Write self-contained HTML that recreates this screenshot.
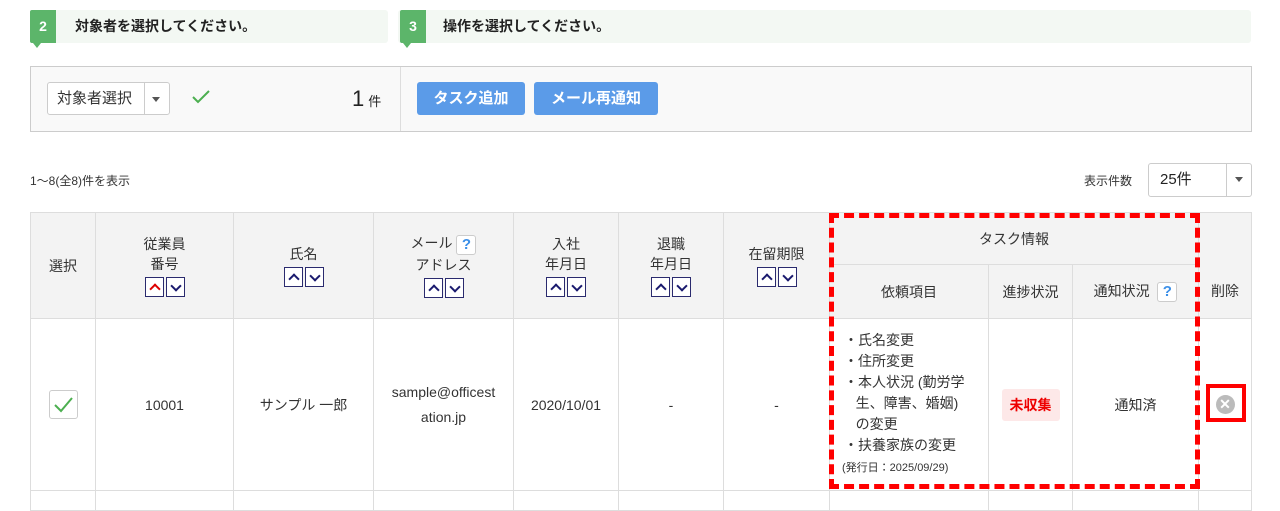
<!DOCTYPE html>
<html><head><meta charset="utf-8"><style>
*{box-sizing:border-box;margin:0;padding:0}
body{width:1280px;height:499px;overflow:hidden;background:#fff;font-family:"Liberation Sans","Noto Sans CJK JP",sans-serif;color:#333;position:relative;font-size:14px}
.a{position:absolute}
.step{background:#f3f8f3;border-radius:3px;height:33px;top:10px}
.badge{position:absolute;left:0;top:0;width:26px;height:33px;background:#5cb56a;color:#fff;font-weight:bold;font-size:14px;text-align:center;line-height:33px;border-radius:2px 0 0 2px}
.badge:after{content:"";position:absolute;left:3px;bottom:-5px;border:4px solid transparent;border-top:5px solid #5cb56a;border-bottom:0}
.step span{position:absolute;left:45px;top:0;line-height:33px;font-weight:bold;font-size:14px;color:#222}
.btn{background:#5b9be8;color:#fff;font-weight:bold;font-size:15px;border-radius:3px;height:33px;line-height:33px;text-align:center;top:82px}
table{position:absolute;left:30px;top:212px;border-collapse:collapse;width:1222px}
td,th{border:1px solid #ddd;text-align:center;font-weight:normal;font-size:14px;color:#333}
th{background:#f3f3f3;line-height:20px}
.s{display:inline-block;width:19px;height:20px;border:1px solid #2a2a6e;margin:3px 1px 0;vertical-align:middle;position:relative;background:#fff}
.s:after{content:"";position:absolute;left:5px;width:6px;height:6px;border-left:2px solid #1a1a6e;border-top:2px solid #1a1a6e}
.u:after{top:7px;transform:rotate(45deg)}
.d:after{top:4px;transform:rotate(225deg)}
.r:after{border-color:#d00}
.q{display:inline-block;width:20px;height:20px;border:1px solid #ccc;border-radius:3px;background:#fff;color:#3b8fe8;font-weight:bold;font-size:15px;line-height:18px;text-align:center;vertical-align:middle}
</style></head><body>
<div class="a step" style="left:30px;width:358px"><div class="badge">2</div><span>対象者を選択してください。</span></div>
<div class="a step" style="left:398px;width:853px"><div class="badge" style="left:2px">3</div><span>操作を選択してください。</span></div>
<div class="a" style="left:30px;top:66px;width:1222px;height:66px;background:#f9f9f9;border:1px solid #ccc"></div>
<div class="a" style="left:400px;top:67px;width:1px;height:64px;background:#ddd"></div>
<div class="a" style="left:47px;top:82px;width:123px;height:33px;background:#fff;border:1px solid #ccc;border-radius:3px;font-size:15px;line-height:31px;padding-left:9px">対象者選択</div>
<div class="a" style="left:144px;top:83px;width:1px;height:31px;background:#ccc"></div>
<div class="a" style="left:152px;top:97px;border:4px solid transparent;border-top:5px solid #555"></div>
<svg class="a" style="left:191px;top:89px" width="20" height="16"><polyline points="2,8 7,13 18,2" fill="none" stroke="#4caf50" stroke-width="2"/></svg>
<div class="a" style="left:352px;top:86px;font-size:22px;color:#222">1<span style="font-size:13px;margin-left:4px">件</span></div>
<div class="a btn" style="left:417px;width:108px">タスク追加</div>
<div class="a btn" style="left:534px;width:124px">メール再通知</div>
<div class="a" style="left:30px;top:172px;font-size:12px;color:#333">1～8(全8)件を表示</div>
<div class="a" style="left:1084px;top:172px;font-size:12px;color:#333">表示件数</div>
<div class="a" style="left:1148px;top:163px;width:104px;height:34px;border:1px solid #ccc;border-radius:3px;font-size:15px;line-height:32px;padding-left:11px;color:#222">25件</div>
<div class="a" style="left:1226px;top:164px;width:1px;height:32px;background:#ccc"></div>
<div class="a" style="left:1235px;top:177px;border:4px solid transparent;border-top:5px solid #555"></div>
<table>
<tr style="height:52px">
<th rowspan="2" style="width:65px">選択</th>
<th rowspan="2" style="width:138px">従業員<br>番号<br><span class="s u r"></span><span class="s d"></span></th>
<th rowspan="2" style="width:140px">氏名<br><span class="s u"></span><span class="s d"></span></th>
<th rowspan="2" style="width:140px">メール <span class="q">?</span><br>アドレス<br><span class="s u"></span><span class="s d"></span></th>
<th rowspan="2" style="width:105px">入社<br>年月日<br><span class="s u"></span><span class="s d"></span></th>
<th rowspan="2" style="width:105px">退職<br>年月日<br><span class="s u"></span><span class="s d"></span></th>
<th rowspan="2" style="width:106px">在留期限<br><span class="s u"></span><span class="s d"></span></th>
<th colspan="3">タスク情報</th>
<th rowspan="1" style="width:53px;border-bottom:none"></th>
</tr>
<tr style="height:54px">
<th style="width:159px">依頼項目</th><th style="width:84px">進捗状況</th><th style="width:126px">通知状況 &nbsp;<span class="q">?</span></th><th style="border-top:none">削除</th>
</tr>
<tr style="height:172px">
<td><span style="display:inline-block;width:29px;height:29px;border:1px solid #ccc;border-radius:3px;vertical-align:middle"><svg width="27" height="27"><polyline points="5,14 11,20 22,7" fill="none" stroke="#4caf50" stroke-width="2"/></svg></span></td>
<td>10001</td><td>サンプル 一郎</td><td style="line-height:25px">sample@officest<br>ation.jp</td><td>2020/10/01</td><td>-</td><td>-</td>
<td style="text-align:left;padding-left:14px;line-height:21px">・氏名変更<br>・住所変更<br>・本人状況 (勤労学<br>&nbsp;&nbsp;&nbsp;生、障害、婚姻)<br>&nbsp;&nbsp;&nbsp;の変更<br>・扶養家族の変更<br><span style="font-size:11px;margin-left:-2px">(発行日：2025/09/29)</span></td>
<td><span style="display:inline-block;background:#fde8e8;color:#e00;font-weight:bold;padding:6px 8px;border-radius:3px">未収集</span></td>
<td>通知済</td>
<td><span style="display:inline-block;width:19px;height:19px;border-radius:50%;background:#bbb;color:#fff;font-size:14px;line-height:19px;font-weight:bold">✕</span></td>
</tr>
<tr style="height:20px"><td></td><td></td><td></td><td></td><td></td><td></td><td></td><td></td><td></td><td></td><td></td></tr>
</table>
<div class="a" style="left:829px;top:213px;width:371px;height:276px;border:5px dashed #f00"></div>
<div class="a" style="left:1206px;top:384px;width:40px;height:38px;border:4px solid #f00"></div>
</body></html>
